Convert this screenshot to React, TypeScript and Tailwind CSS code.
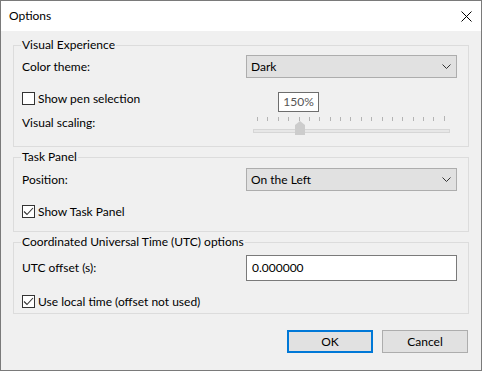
import React from "react";

function Chevron() {
  return (
    <svg width="9" height="6" viewBox="0 0 9 6" className="block">
      <polyline points="0.5,0.5 4.5,4.5 8.5,0.5" fill="none" stroke="#333" strokeWidth="1" />
    </svg>
  );
}

function Select({ value }: { value: string }) {
  return (
    <div className="w-[211px] h-[23px] border border-[#adadad] bg-[#e1e1e1] flex items-center justify-between pl-[4px] pr-[5px]">
      <span>{value}</span>
      <Chevron />
    </div>
  );
}

function Checkbox({ checked, label }: { checked: boolean; label: string }) {
  return (
    <div className="flex items-center h-[13px] gap-[3px]">
      <div className="w-[13px] h-[13px] border border-[#333333] bg-white flex items-center justify-center">
        {checked && (
          <svg width="11" height="11" viewBox="0 0 11 11" className="block">
            <polyline points="1,5.5 4,8.5 10,2" fill="none" stroke="#333" strokeWidth="1.1" />
          </svg>
        )}
      </div>
      <span className="leading-[16px]">{label}</span>
    </div>
  );
}

function Group({ title, className, children }: { title: string; className?: string; children: React.ReactNode }) {
  return (
    <div className={`relative border border-[#dcdcdc] ${className ?? ""}`}>
      <span className="absolute left-[7px] top-[-9px] px-[1px] bg-[#f0f0f0] leading-[16px]">{title}</span>
      {children}
    </div>
  );
}

export default function App() {
  const ticks = Array.from({ length: 19 }, (_, i) => i);
  return (
    <div className="w-[482px] h-[371px] border border-[#7a7a7a] bg-[#f0f0f0] flex flex-col text-[12px] text-black font-['Lato',sans-serif] overflow-hidden">
      <div className="h-[30px] bg-white flex items-center justify-between pl-[8px] pr-[9px] shrink-0">
        <span className="leading-[16px]">Options</span>
        <svg width="11" height="11" viewBox="0 0 11 11" className="block">
          <line x1="0.5" y1="0.5" x2="10.5" y2="10.5" stroke="#000" strokeWidth="1" />
          <line x1="10.5" y1="0.5" x2="0.5" y2="10.5" stroke="#000" strokeWidth="1" />
        </svg>
      </div>
      <div className="flex flex-col px-[12px]">
        <Group title="Visual Experience" className="mt-[14px] pt-[9px] pl-[8px] pr-[11px] pb-[11px]">
          <div className="flex items-center justify-between h-[23px]">
            <span className="leading-[16px]">Color theme:</span>
            <Select value="Dark" />
          </div>
          <div className="flex justify-between">
            <div className="flex flex-col">
              <div className="mt-[14px]">
                <Checkbox checked={false} label="Show pen selection" />
              </div>
              <span className="mt-[10px] leading-[16px]">Visual scaling:</span>
            </div>
            <div className="w-[211px] flex flex-col">
              <div className="mt-[14px] ml-[32px] w-[41px] h-[20px] border border-[#6d6d6d] bg-white flex items-center justify-center text-[#555]">
                150%
              </div>
              <div className="mt-[5px] ml-[11px] w-[188px] h-[4px] flex justify-between items-end">
                {ticks.map((t) => (
                  <div key={t} className={`w-[1px] bg-[#b4b4b4] ${t === 18 ? "h-[5px]" : "h-[4px]"}`} />
                ))}
              </div>
              <div className="relative h-[14px]">
                <div className="mt-[8px] ml-[7px] w-[197px] h-[4px] border border-[#d6d6d6] bg-[#e7e7e7]" />
                <svg width="10" height="14" viewBox="0 0 10 14" className="absolute left-[49px] top-0 block">
                  <polygon points="0,4 5,0 10,4 10,14 0,14" fill="#cccccc" />
                </svg>
              </div>
            </div>
          </div>
        </Group>

        <Group title="Task Panel" className="mt-[10px] pt-[10px] pl-[8px] pr-[11px] pb-[13px]">
          <div className="flex items-center justify-between h-[23px]">
            <span className="leading-[16px]">Position:</span>
            <Select value="On the Left" />
          </div>
          <div className="mt-[14px]">
            <Checkbox checked={true} label="Show Task Panel" />
          </div>
        </Group>

        <Group title="Coordinated Universal Time (UTC) options" className="mt-[10px] pt-[12px] pl-[8px] pr-[11px] pb-[5px]">
          <div className="flex items-center justify-between h-[26px]">
            <span className="leading-[16px]">UTC offset (s):</span>
            <div className="w-[211px] h-[26px] border border-[#7a7a7a] bg-white flex items-center pl-[5px]">
              0.000000
            </div>
          </div>
          <div className="mt-[14px]">
            <Checkbox checked={true} label="Use local time (offset not used)" />
          </div>
        </Group>

        <div className="mt-[16px] mr-[1px] flex justify-end gap-[9px]">
          <div className="w-[86px] h-[23px] border-2 border-[#0078d7] bg-[#e1e1e1] flex items-center justify-center">OK</div>
          <div className="w-[86px] h-[23px] border border-[#adadad] bg-[#e1e1e1] flex items-center justify-center">Cancel</div>
        </div>
      </div>
    </div>
  );
}
